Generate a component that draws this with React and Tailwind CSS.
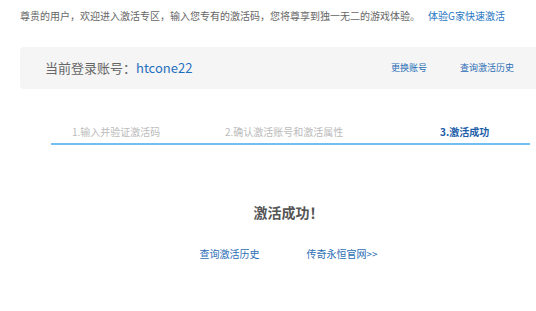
import React from "react";

function App() {
  return (
    <div className="w-[536px] h-[311px] overflow-hidden bg-white font-['Noto_Sans_CJK_SC',sans-serif]">
      <div className="ml-[20px] w-[537px]">

        {/* intro */}
        <p className="pt-[8px] text-[10px] leading-[16px] text-[#666] whitespace-nowrap">
          尊贵的用户，欢迎进入激活专区，输入您专有的激活码，您将尊享到独一无二的游戏体验。
          <span className="ml-[8px] text-[#2a78c4]">体验G家快速激活</span>
        </p>

        {/* account bar */}
        <div className="mt-[23px] h-[42px] rounded-[4px] bg-[#f5f5f5] flex items-center pl-[25px] pr-[43px]">
          <span className="text-[13px] text-[#666]">
            当前登录账号：<span className="text-[#1f6fbf]">htcone22</span>
          </span>
          <div className="ml-auto flex gap-[33px] text-[9px] text-[#2a6db5]">
            <span>更换账号</span>
            <span>查询激活历史</span>
          </div>
        </div>

        {/* steps */}
        <div className="mt-[35px] ml-[31px] w-[479px]">
          <div className="flex pl-[21px] text-[10px] leading-[16px]">
            <span className="w-[153px] text-[#bbb]">1.输入并验证激活码</span>
            <span className="w-[215px] text-[#bbb]">2.确认激活账号和激活属性</span>
            <span className="font-bold text-[#1d5ea8]">3.激活成功</span>
          </div>
          <div className="mt-[3px] h-[2px] bg-[#72c0f2]"></div>
        </div>

        {/* result */}
        <h2 className="mt-[57px] text-center text-[14px] leading-[20px] font-bold text-[#555]">
          激活成功！
        </h2>
        <div className="mt-[24px] flex justify-center gap-[47px] text-[10px] leading-[16px] text-[#2a6db5]">
          <span>查询激活历史</span>
          <span>传奇永恒官网&gt;&gt;</span>
        </div>

      </div>
    </div>
  );
}

export default App;
